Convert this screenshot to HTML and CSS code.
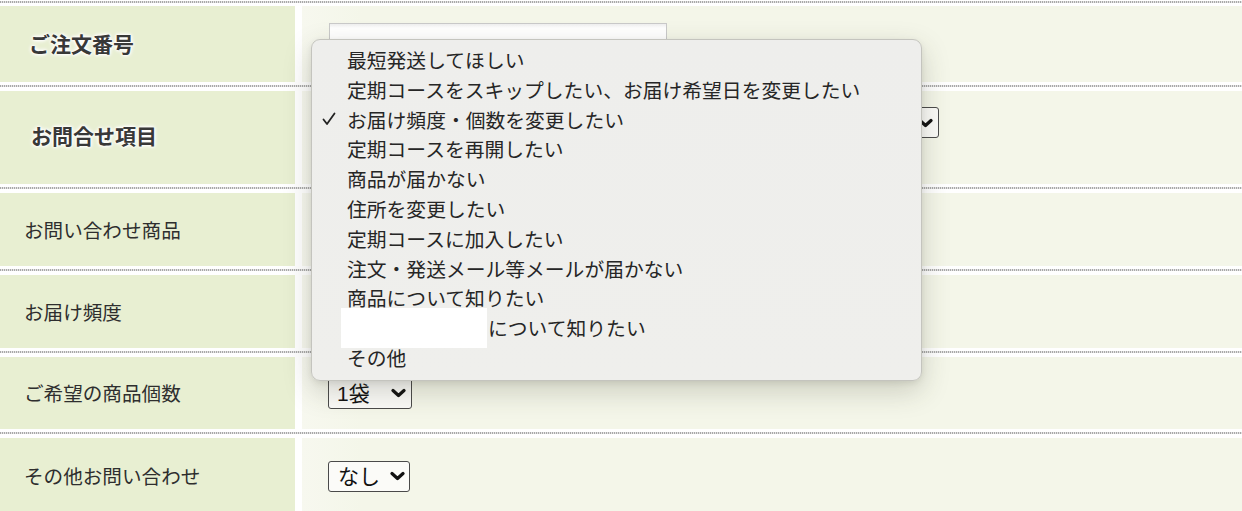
FILE: index.html
```html
<!DOCTYPE html>
<html lang="ja">
<head>
<meta charset="utf-8">
<title>お問い合わせフォーム</title>
<link rel="stylesheet" href="styles.css">
</head>
<body>
<div class="page">
  <div class="form">
    <div class="sep sep-first"></div>
    <div class="row row-1">
      <div class="label label-strong label-1">ご注文番号</div>
      <div class="field field-1"><span class="textbox"></span></div>
    </div>
    <div class="sep"></div>
    <div class="row row-2">
      <div class="label label-strong label-2">お問合せ項目</div>
      <div class="field field-2">
        <span class="select select-wide"><span class="select-text"></span><svg class="chev" width="15" height="10" viewBox="0 0 15 10"><path d="M2 2.5 L7.5 7.5 L13 2.5" fill="none" stroke="#111" stroke-width="3.2" stroke-linecap="round" stroke-linejoin="round"/></svg></span>
      </div>
    </div>
    <div class="sep"></div>
    <div class="row row-3">
      <div class="label">お問い合わせ商品</div>
      <div class="field"></div>
    </div>
    <div class="sep"></div>
    <div class="row row-4">
      <div class="label">お届け頻度</div>
      <div class="field"></div>
    </div>
    <div class="sep"></div>
    <div class="row row-5">
      <div class="label">ご希望の商品個数</div>
      <div class="field">
        <span class="select select-qty"><span class="select-text">1袋</span><svg class="chev" width="15" height="10" viewBox="0 0 15 10"><path d="M2 2.5 L7.5 7.5 L13 2.5" fill="none" stroke="#111" stroke-width="3.2" stroke-linecap="round" stroke-linejoin="round"/></svg></span>
      </div>
    </div>
    <div class="sep"></div>
    <div class="row row-6">
      <div class="label">その他お問い合わせ</div>
      <div class="field">
        <span class="select select-none"><span class="select-text">なし</span><svg class="chev" width="15" height="10" viewBox="0 0 15 10"><path d="M2 2.5 L7.5 7.5 L13 2.5" fill="none" stroke="#111" stroke-width="3.2" stroke-linecap="round" stroke-linejoin="round"/></svg></span>
      </div>
    </div>
  </div>

  <ul class="menu">
    <li class="menu-item"><span class="check"></span><span>最短発送してほしい</span></li>
    <li class="menu-item"><span class="check"></span><span>定期コースをスキップしたい、お届け希望日を変更したい</span></li>
    <li class="menu-item"><span class="check"><svg width="14" height="14" viewBox="0 0 14 14"><path d="M1.5 7.5 L5 12 L12.5 1.5" fill="none" stroke="#222" stroke-width="1.8" stroke-linecap="round" stroke-linejoin="round"/></svg></span><span>お届け頻度・個数を変更したい</span></li>
    <li class="menu-item"><span class="check"></span><span>定期コースを再開したい</span></li>
    <li class="menu-item"><span class="check"></span><span>商品が届かない</span></li>
    <li class="menu-item"><span class="check"></span><span>住所を変更したい</span></li>
    <li class="menu-item"><span class="check"></span><span>定期コースに加入したい</span></li>
    <li class="menu-item"><span class="check"></span><span>注文・発送メール等メールが届かない</span></li>
    <li class="menu-item"><span class="check"></span><span>商品について知りたい</span></li>
    <li class="menu-item"><span class="check"></span><span class="redacted-wrap"><span class="redacted"></span><span class="after-redacted">について知りたい</span></span></li>
    <li class="menu-item"><span class="check"></span><span>その他</span></li>
  </ul>
</div>
</body>
</html>
```

FILE: styles.css
```css
* { box-sizing: border-box; }

html, body {
  margin: 0;
  padding: 0;
  background: #ffffff;
}

body {
  font-family: "Noto Sans CJK JP", "Noto Sans", sans-serif;
  color: #333333;
  width: 1242px;
  height: 511px;
  overflow: hidden;
}

.page {
  position: relative;
  width: 1242px;
  height: 511px;
}

.form {
  display: flex;
  flex-direction: column;
}

.sep {
  height: 2px;
  margin: 3px 0 4px;
  background: repeating-linear-gradient(to right, #a9a9a9 0 1px, #e4e4e4 1px 2px);
}

.sep-first {
  margin-top: 1px;
  margin-bottom: 3px;
}

.row {
  display: grid;
  grid-template-columns: 295px 1fr;
  column-gap: 7px;
}

.row-1 { height: 76px; }
.row-2 { height: 93px; }
.row-3 { height: 73px; }
.row-4 { height: 73px; }
.row-5 { height: 72px; }
.row-6 { height: 76px; }

.label {
  background: #e8efd2;
  display: flex;
  align-items: center;
  padding-left: 24px;
  font-size: 19.6px;
  line-height: 1;
  color: #2e2e2e;
}

.label-strong {
  font-weight: 700;
  font-size: 21px;
  color: #383838;
  text-shadow: 0 0 2px #ffffff, 0 0 3px #ffffff, 0 0 4px #ffffff, 0 0 5px #ffffff;
}

.label-1 { padding-left: 29px; padding-bottom: 1px; }
.label-2 { padding-left: 31px; padding-bottom: 5px; }

.field {
  background: linear-gradient(to right, #f7f8ef 0, #f4f6e9 60px, #f4f6e9 100%);
  display: flex;
  align-items: center;
  padding-left: 26px;
}

.field-1 { align-items: flex-start; padding-top: 17px; padding-left: 27px; }
.field-2 { align-items: flex-start; padding-top: 16px; }

.textbox {
  display: block;
  width: 338px;
  height: 38px;
  border: 1px solid #c9c9c9;
  background: linear-gradient(to bottom, #eeeeee 0, #ffffff 4px, #ffffff 100%);
}

.select {
  display: inline-flex;
  align-items: center;
  justify-content: space-between;
  height: 31px;
  border: 1px solid #4a4a4a;
  border-radius: 3px;
  background: #fbfbf8;
  padding: 0 5px 0 7px;
  font-family: "Liberation Sans", "Noto Sans CJK JP", sans-serif;
  font-size: 21px;
  line-height: 1;
  color: #111111;
}

.select-wide { width: 611px; justify-content: flex-end; }
.select-qty { width: 84px; padding-left: 8px; padding-right: 5px; }
.select-none { width: 82px; padding-left: 9px; padding-right: 4px; }

.select-text { display: block; }

.chev { display: block; flex: none; }

.menu {
  position: absolute;
  left: 311px;
  top: 39px;
  width: 611px;
  height: 342px;
  margin: 0;
  padding: 5px 0 0;
  list-style: none;
  background: linear-gradient(to bottom, #eeeeec 0, #efefec 100%);
  border: 1px solid #c4c4be;
  border-radius: 9px;
  box-shadow: 0 10px 28px rgba(60, 60, 40, 0.22), 0 2px 6px rgba(0, 0, 0, 0.08);
}

.menu-item {
  display: flex;
  align-items: center;
  height: 29.8px;
  font-size: 19.8px;
  line-height: 1;
  color: #262626;
  white-space: nowrap;
}

.check {
  flex: none;
  display: flex;
  align-items: center;
  width: 35px;
  height: 100%;
  padding-left: 10px;
}

.redacted-wrap {
  position: relative;
  display: block;
}

.redacted {
  position: absolute;
  left: -6px;
  top: -10px;
  width: 146px;
  height: 40px;
  background: #ffffff;
}

.after-redacted {
  display: block;
  padding-left: 141px;
}
```
